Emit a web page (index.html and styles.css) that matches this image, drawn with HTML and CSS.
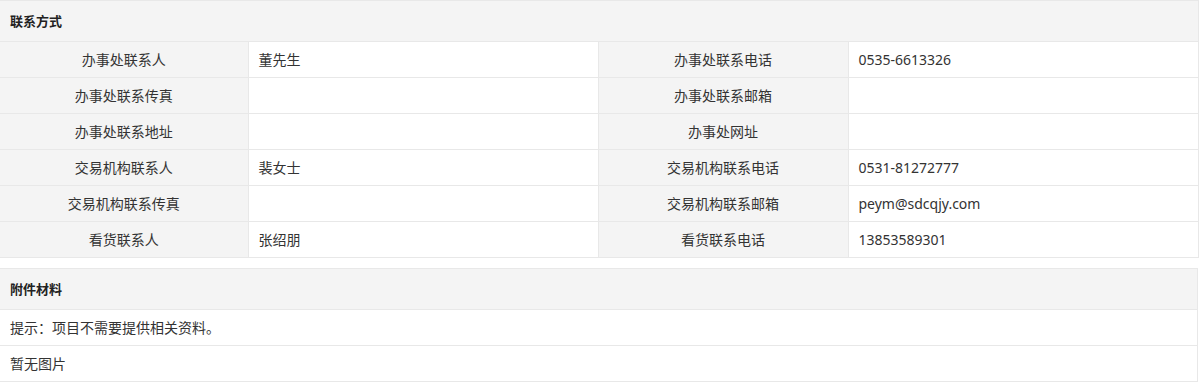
FILE: index.html
```html
<!DOCTYPE html>
<html lang="zh-CN">
<head>
<meta charset="utf-8">
<title>联系方式</title>
<link rel="stylesheet" href="styles.css">
</head>
<body>
<div class="page">
  <table class="info">
    <colgroup>
      <col class="c1"><col class="c2"><col class="c3"><col class="c4">
    </colgroup>
    <thead>
      <tr><th colspan="4" class="title">联系方式</th></tr>
    </thead>
    <tbody>
      <tr><td class="lbl">办事处联系人</td><td class="val">董先生</td><td class="lbl">办事处联系电话</td><td class="val">0535-6613326</td></tr>
      <tr><td class="lbl">办事处联系传真</td><td class="val"></td><td class="lbl">办事处联系邮箱</td><td class="val"></td></tr>
      <tr><td class="lbl">办事处联系地址</td><td class="val"></td><td class="lbl">办事处网址</td><td class="val"></td></tr>
      <tr><td class="lbl">交易机构联系人</td><td class="val">裴女士</td><td class="lbl">交易机构联系电话</td><td class="val">0531-81272777</td></tr>
      <tr><td class="lbl">交易机构联系传真</td><td class="val"></td><td class="lbl">交易机构联系邮箱</td><td class="val">peym@sdcqjy.com</td></tr>
      <tr><td class="lbl">看货联系人</td><td class="val">张绍朋</td><td class="lbl">看货联系电话</td><td class="val">13853589301</td></tr>
    </tbody>
  </table>
  <table class="info second">
    <thead>
      <tr><th class="title">附件材料</th></tr>
    </thead>
    <tbody>
      <tr><td class="val">提示：项目不需要提供相关资料。</td></tr>
      <tr><td class="val">暂无图片</td></tr>
    </tbody>
  </table>
</div>
</body>
</html>
```
FILE: styles.css
```css
html, body {
  margin: 0;
  padding: 0;
  background: #ffffff;
}
.page {
  width: 1198px;
  font-family: "Noto Sans", "Noto Sans CJK SC", sans-serif;
  font-size: 14px;
  color: #333333;
}
.info {
  width: 1198px;
  border-collapse: collapse;
  table-layout: fixed;
}
.second {
  margin-top: 10px;
}
.c1 { width: 248px; }
.c2 { width: 350px; }
.c3 { width: 250px; }
.c4 { width: 350px; }
.info th, .info td {
  border: 1px solid #e8e8e8;
  padding: 0;
  line-height: 20px;
}
.info th:first-child, .info td:first-child {
  border-left: none;
}
.title {
  height: 40px;
  background: #f4f4f4;
  text-align: left;
  padding-left: 10px !important;
  font-weight: bold;
  font-size: 13px;
  color: #222222;
}
.info td {
  height: 35px;
}
.lbl {
  background: #f4f4f4;
  text-align: center;
}
.val {
  background: #ffffff;
  text-align: left;
  padding-left: 10px !important;
}
```
